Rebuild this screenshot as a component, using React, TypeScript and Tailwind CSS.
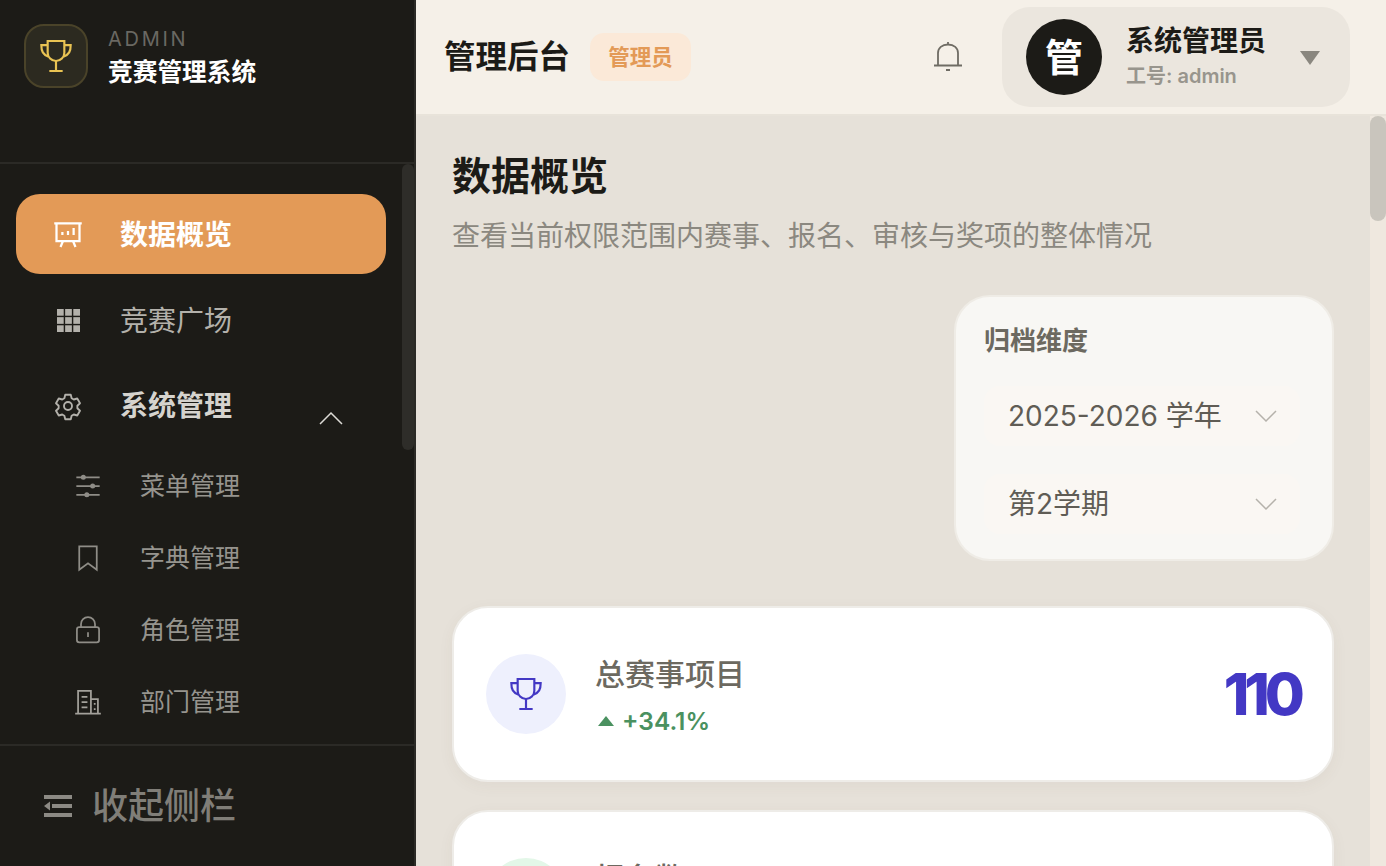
import type { ReactNode } from "react";

const CJK = "font-['Inter','Noto_Sans_CJK_SC',sans-serif]";

function Svg({ size, children, className }: { size: number; children: ReactNode; className?: string }) {
  return (
    <svg
      width={size}
      height={size}
      viewBox="0 0 24 24"
      fill="none"
      stroke="currentColor"
      strokeWidth="1.5"
      className={className}
    >
      {children}
    </svg>
  );
}

function TrophyIcon({ size, className }: { size: number; className?: string }) {
  return (
    <svg width={size} height={size} viewBox="0 0 24 24" fill="none" stroke="currentColor" strokeWidth="1.300" className={className}>
      <path d="M7 3h10v7a5 5 0 0 1-10 0V3Z" />
      <path d="M7 5.500H3.200c0 3.600.9 5.600 4.400 7M17 5.500h3.800c0 3.600-.9 5.600-4.400 7" />
      <path d="M12 15v6M8 21h8" />
    </svg>
  );
}

function BoardIcon() {
  return (
    <svg width="30" height="30" viewBox="0 0 24 24" fill="none" stroke="currentColor" strokeWidth="1.800" className="text-white">
      <path d="M1 3.500h22M2.800 3.500v14.100h18.400V3.500" />
      <path d="M8 17.600 6 22.400M16 17.600l2 4.800M7.500 12.800v-2.400M12 12.800V9.600M16.500 12.800V7.200" />
    </svg>
  );
}

function GridIcon() {
  return (
    <svg width="23" height="23" viewBox="0 0 24 24" fill="#b3b1ab">
      {[0, 8.500, 17].map((y) =>
        [0, 8.500, 17].map((x) => <rect key={`${x}-${y}`} x={x} y={y} width="7" height="7" />)
      )}
    </svg>
  );
}

function GearIcon() {
  return (
    <Svg size={30} className="text-[#b3b1ab]">
      <path d="M9.800 3h4.400l.7 2.800 1.700 1 2.800-.8 2.200 3.800-2.100 2 0 2 2.100 2-2.200 3.800-2.800-.8-1.700 1-.7 2.800H9.800l-.7-2.800-1.700-1-2.800.8-2.200-3.800 2.100-2 0-2-2.100-2L4.600 6l2.800.8 1.700-1L9.800 3Z" strokeLinejoin="round" />
      <circle cx="12" cy="12" r="3.200" />
    </Svg>
  );
}

function SlidersIcon() {
  return (
    <Svg size={28} className="text-[#8f8d87]">
      <path d="M2 4.500h20M2 12h20M2 19.500h20" />
      <circle cx="8" cy="4.500" r="1.400" fill="currentColor" />
      <circle cx="16" cy="12" r="1.400" fill="currentColor" />
      <circle cx="11" cy="19.500" r="1.400" fill="currentColor" />
    </Svg>
  );
}

function BookmarkIcon() {
  return (
    <Svg size={28} className="text-[#8f8d87]">
      <path d="M4.500 2h15v20L12 16.500 4.500 22V2Z" />
    </Svg>
  );
}

function LockIcon() {
  return (
    <Svg size={28} className="text-[#8f8d87]">
      <rect x="2.500" y="9.500" width="19" height="13" rx="2" />
      <path d="M6 9.500V7a6 6 0 0 1 12 0v2.500M12 14v4" />
    </Svg>
  );
}

function BuildingIcon() {
  return (
    <Svg size={30} className="text-[#a3a19b]">
      <path d="M1 22h22M3.500 22V2.500h11V22M14.500 9.500h6V22M6.500 7.500h5M6.500 12h5M6.500 16.500h5M17 13.500h1.500M17 18h1.500" />
    </Svg>
  );
}

function CollapseIcon() {
  return (
    <svg width="28" height="24" viewBox="0 0 28 24" fill="#8c8a84">
      <rect x="0" y="1" width="28" height="4" />
      <rect x="8" y="10" width="20" height="4" />
      <rect x="0" y="19" width="28" height="4" />
      <path d="M6 7.500v9L0 12Z" />
    </svg>
  );
}

function Chevron({ up, className }: { up?: boolean; className?: string }) {
  return (
    <svg width="24" height="14" viewBox="0 0 24 14" fill="none" stroke="currentColor" strokeWidth="1.500" className={className}>
      <path d={up ? "M1 13 12 2l11 11" : "M2 2l10 10L22 2"} />
    </svg>
  );
}

function SubItem({ icon, label }: { icon: ReactNode; label: string }) {
  return (
    <div className="flex h-[72px] items-center pl-[74px]">
      <span className="flex w-[28px] justify-center">{icon}</span>
      <span className="ml-[38px] mt-[2px] text-[25px] text-[#96948e]">{label}</span>
    </div>
  );
}

function Sidebar() {
  return (
    <aside className="flex h-full w-[416px] shrink-0 flex-col border-r-2 border-[#2b2a26] bg-[#1c1b17]">
      <div className="flex h-[164px] shrink-0 items-start border-b-2 border-[#2b2a26] pl-[24px] pt-[24px]">
        <div className="flex h-[64px] w-[64px] items-center justify-center rounded-[20px] border-2 border-[#4a4329] bg-[#2c2a20]">
          <TrophyIcon size={40} className="text-[#e9c353]" />
        </div>
        <div className="ml-[20px] flex flex-col">
          <span className="text-[20px] leading-[30px] tracking-[2.700px] text-[#6a6862]">ADMIN</span>
          <span className="text-[24.700px] leading-[36px] font-bold text-white">竞赛管理系统</span>
        </div>
      </div>

      <div className="flex min-h-0 flex-1 overflow-hidden">
        <nav className="min-w-0 flex-1 pt-[30px]">
          <div className="ml-[16px] flex h-[80px] w-[370px] items-center rounded-[24px] bg-[#e39a57] pl-[37px]">
            <BoardIcon />
            <span className="ml-[37px] mt-[1px] text-[28px] font-bold text-white">数据概览</span>
          </div>
          <div className="mt-[4px] flex h-[84px] items-center pl-[56px]">
            <span className="flex w-[24px] justify-center"><GridIcon /></span>
            <span className="ml-[40px] mt-[1px] text-[28px] text-[#b3b1ab]">竞赛广场</span>
          </div>
          <div className="flex h-[88px] items-center pl-[53px]">
            <GearIcon />
            <span className="ml-[37px] text-[28px] font-bold text-[#d5d3ce]">系统管理</span>
            <Chevron up className="ml-[87px] mt-[24px] text-[#dddbd6]" />
          </div>
          <SubItem icon={<SlidersIcon />} label="菜单管理" />
          <SubItem icon={<BookmarkIcon />} label="字典管理" />
          <SubItem icon={<LockIcon />} label="角色管理" />
          <SubItem icon={<BuildingIcon />} label="部门管理" />
        </nav>
        <div className="w-[12px] shrink-0">
          <div className="h-[286px] w-[12px] rounded-full bg-[#2e2d29]" />
        </div>
      </div>

      <div className="flex h-[122px] shrink-0 items-center border-t-2 border-[#2b2a26] pl-[44px]">
        <CollapseIcon />
        <span className="ml-[20px] text-[36px] font-medium text-[#807e78]">收起侧栏</span>
      </div>
    </aside>
  );
}

function Header() {
  return (
    <header className="flex h-[116px] shrink-0 items-center border-b-2 border-[#e8e3da] bg-[#f5f0e8] pl-[28px] pr-[36px]">
      <span className="text-[31.500px] font-bold text-[#1c1b17]">管理后台</span>
      <span className="ml-[20px] flex h-[48px] w-[101px] items-center justify-center rounded-[14px] bg-[#fbe9d8] text-[21.500px] font-semibold text-[#e39a57]">
        管理员
      </span>
      <svg width="30" height="32" viewBox="0 0 30 32" fill="none" stroke="#6f6c64" strokeWidth="1.800" className="ml-auto">
        <path d="M1 24.500h28M5 24.500V12c0-5 4-8.500 10-8.500S25 7 25 12v12.500M15 1v2.500M13 29h4" />
      </svg>
      <div className="ml-[39px] flex h-[100px] w-[348px] items-center rounded-[28px] bg-[#ebe6de] pl-[24px]">
        <div className="flex h-[76px] w-[76px] items-center justify-center rounded-full bg-[#1c1b17] text-[38px] font-bold text-white">
          管
        </div>
        <div className="ml-[24px] flex flex-col">
          <span className="text-[28px] leading-[36px] font-bold text-[#1c1b17]">系统管理员</span>
          <span className="mt-[2px] text-[20px] leading-[30px] font-semibold text-[#98958d]">工号: admin</span>
        </div>
        <svg width="20" height="14" viewBox="0 0 20 14" fill="#8a877f" className="ml-[34px] mt-[2px]">
          <path d="M0 0h20L10 14Z" />
        </svg>
      </div>
    </header>
  );
}

function FilterSelect({ label, className }: { label: string; className?: string }) {
  return (
    <div className={`flex h-[60px] w-[316px] items-center justify-between rounded-[16px] bg-[#faf7f3] pl-[24px] pr-[22px] ${className ?? ""}`}>
      <span className="text-[28px] text-[#5f5c55]">{label}</span>
      <Chevron className="text-[#b5b2ab]" />
    </div>
  );
}

function StatCard({
  icon,
  iconBg,
  label,
  trend,
  value,
  className,
}: {
  icon?: ReactNode;
  iconBg: string;
  label: string;
  trend?: string;
  value?: string;
  className?: string;
}) {
  return (
    <div className={`flex h-[176px] shrink-0 items-center rounded-[36px] border-2 border-[#eeece8] bg-white pl-[32px] pr-[32px] shadow-[0_4px_16px_rgba(90,80,60,0.05)] ${className ?? ""}`}>
      <div className={`flex h-[80px] w-[80px] items-center justify-center rounded-full ${iconBg}`}>{icon}</div>
      <div className="ml-[29px] flex h-[84px] flex-col">
        <span className="text-[30px] leading-[44px] font-medium text-[#6c6960]">{label}</span>
        {trend && (
          <span className="mt-[7px] flex items-center text-[24.500px] leading-[36px] font-semibold text-[#4a9160]">
            <svg width="16" height="10" viewBox="0 0 16 10" fill="currentColor" className="ml-[3px] mr-[8px]">
              <path d="M8 0l8 10H0Z" />
            </svg>
            {trend}
          </span>
        )}
      </div>
      {value && <span className="ml-auto text-[58px] font-extrabold tracking-[-5px] text-[#4338c4]">{value}</span>}
    </div>
  );
}

function Main() {
  return (
    <div className="flex min-h-0 flex-1">
      <main className="flex min-w-0 flex-1 flex-col overflow-hidden bg-[#e6e1d9] pl-[36px] pr-[36px] pt-[32px]">
        <h1 className="text-[39px] leading-[56px] font-bold text-[#1c1b17]">数据概览</h1>
        <p className="mt-[12px] text-[28px] leading-[40px] text-[#8b8880]">
          查看当前权限范围内赛事、报名、审核与奖项的整体情况
        </p>

        <div className="mt-[39px] flex justify-end">
          <div className="h-[266px] w-[380px] rounded-[36px] border-2 border-[#efece6] bg-[#f8f7f4] pl-[28px] pt-[26px]">
            <div className="text-[26px] leading-[36px] font-semibold text-[#6c6960]">归档维度</div>
            <FilterSelect label="2025-2026 学年" className="mt-[27px]" />
            <FilterSelect label="第2学期" className="mt-[28px]" />
          </div>
        </div>

        <StatCard
          className="mt-[45px]"
          icon={<TrophyIcon size={40} className="text-[#4338c4]" />}
          iconBg="bg-[#eef0fd]"
          label="总赛事项目"
          trend="+34.1%"
          value="110"
        />
        <StatCard className="mt-[28px]" iconBg="bg-[#e3f7e8]" label="报名数" />
      </main>
      <div className="w-[16px] shrink-0 bg-[#efe8df]">
        <div className="h-[105px] w-[16px] rounded-full bg-[#c9c5bd]" />
      </div>
    </div>
  );
}

export default function App() {
  return (
    <div className={`flex h-[866px] w-[1386px] overflow-hidden ${CJK}`}>
      <Sidebar />
      <div className="flex min-w-0 flex-1 flex-col">
        <Header />
        <Main />
      </div>
    </div>
  );
}
